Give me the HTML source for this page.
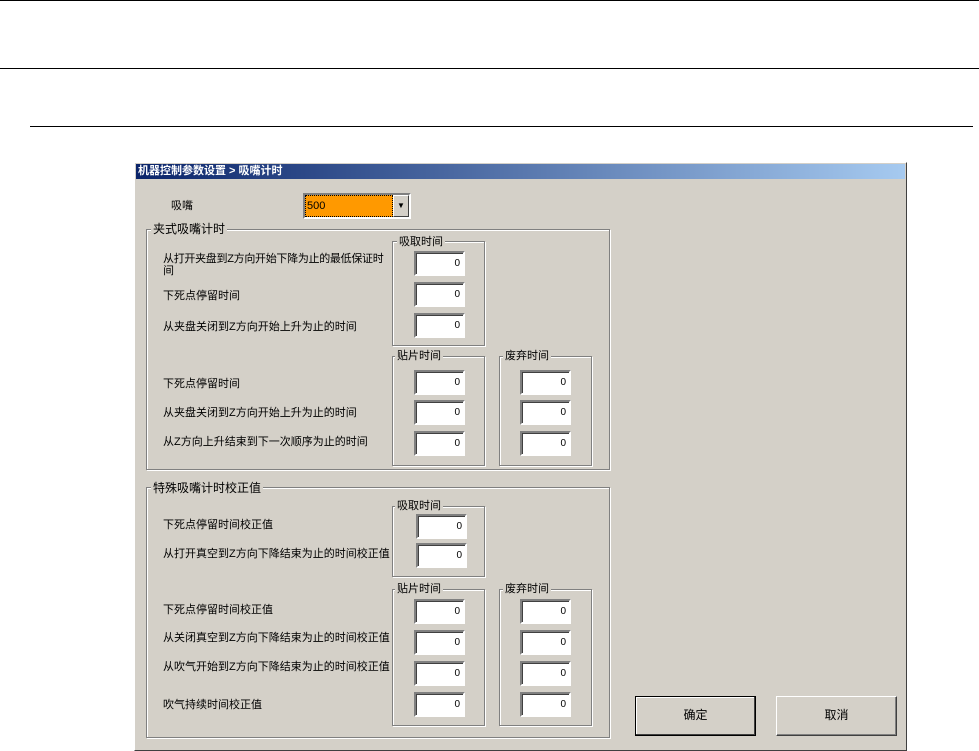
<!DOCTYPE html><html><head><meta charset="utf-8"><style>
body{margin:0;width:979px;height:751px;background:#fff;position:relative;overflow:hidden;font-family:"Liberation Sans","Noto Sans CJK SC",sans-serif;font-size:11px;color:#000}
div{position:absolute;box-sizing:border-box}
.hl{height:1px;background:#000}
.win{left:134px;top:162px;width:773px;height:589px;background:#d4d0c8;border:1px solid #fff;border-right-color:#404040;border-bottom-color:#404040}
.tb{left:136px;top:164px;width:769px;height:15px;background:linear-gradient(90deg,#0a246a,#a6caf0);color:#fff;font-weight:bold;font-size:11px;line-height:15px;padding-left:2px}
.g{border:1px solid #808080;box-shadow:1px 1px 0 #fff inset,1px 1px 0 #fff}
.gl{background:#d4d0c8;padding:0 2px;line-height:12px;white-space:nowrap}
.in{width:51px;height:25px;background:#fff;border:2px solid;border-color:#808080 #fff #fff #808080;box-shadow:1px 1px 0 #404040 inset;text-align:right;padding-right:3px;line-height:21px;font-size:10px}
.t{white-space:nowrap;line-height:12px}
.btn{width:121px;height:40px;background:#d4d0c8;border:1px solid;border-color:#fff #404040 #404040 #fff;box-shadow:-1px -1px 0 #808080 inset;text-align:center;line-height:37px;font-size:12px}
</style></head><body>
<div class="hl" style="left:0;top:0;width:979px"></div>
<div class="hl" style="left:0;top:68px;width:979px"></div>
<div class="hl" style="left:30px;top:126px;width:943px"></div>
<div class="win"></div>
<div class="tb">机器控制参数设置 &gt; 吸嘴计时</div>
<div class="t" style="left:171px;top:200px">吸嘴</div>
<div style="left:303px;top:193px;width:108px;height:26px;border:2px solid;border-color:#808080 #fff #fff #808080;background:#fff"></div>
<div style="left:305px;top:195px;width:88px;height:22px;background:#ff9900;border:1px dotted #000;line-height:20px;padding-left:1px">500</div>
<div style="left:393px;top:195px;width:16px;height:22px;background:#d4d0c8;border:1px solid;border-color:#fff #404040 #404040 #fff;text-align:center;font-size:8px;line-height:20px">▼</div>

<div class="g" style="left:146px;top:229px;width:464px;height:241px"></div>
<div class="gl" style="left:151px;top:223px;font-size:12px">夹式吸嘴计时</div>
<div class="t" style="left:163px;top:253px;font-size:11px;letter-spacing:-0.3px">从打开夹盘到Z方向开始下降为止的最低保证时<br>间</div>
<div class="t" style="left:163px;top:290px">下死点停留时间</div>
<div class="t" style="left:163px;top:321px">从夹盘关闭到Z方向开始上升为止的时间</div>
<div class="g" style="left:392px;top:241px;width:93px;height:105px"></div>
<div class="gl" style="left:397px;top:236px">吸取时间</div>
<div class="in" style="left:414px;top:251px">0</div>
<div class="in" style="left:414px;top:282px">0</div>
<div class="in" style="left:414px;top:313px">0</div>
<div class="g" style="left:392px;top:356px;width:93px;height:110px"></div>
<div class="gl" style="left:395px;top:350px">贴片时间</div>
<div class="g" style="left:499px;top:356px;width:93px;height:110px"></div>
<div class="gl" style="left:503px;top:350px">废弃时间</div>
<div class="in" style="left:414px;top:370px">0</div><div class="in" style="left:414px;top:400px">0</div><div class="in" style="left:414px;top:431px">0</div>
<div class="in" style="left:520px;top:370px">0</div><div class="in" style="left:520px;top:400px">0</div><div class="in" style="left:520px;top:431px">0</div>
<div class="t" style="left:163px;top:378px">下死点停留时间</div>
<div class="t" style="left:163px;top:407px">从夹盘关闭到Z方向开始上升为止的时间</div>
<div class="t" style="left:163px;top:436px">从Z方向上升结束到下一次顺序为止的时间</div>

<div class="g" style="left:146px;top:487px;width:464px;height:251px"></div>
<div class="gl" style="left:151px;top:482px;font-size:12px">特殊吸嘴计时校正值</div>
<div class="g" style="left:392px;top:506px;width:93px;height:71px"></div>
<div class="gl" style="left:395px;top:500px">吸取时间</div>
<div class="in" style="left:416px;top:514px">0</div><div class="in" style="left:416px;top:543px">0</div>
<div class="t" style="left:163px;top:519px">下死点停留时间校正值</div>
<div class="t" style="left:163px;top:548px">从打开真空到Z方向下降结束为止的时间校正值</div>
<div class="g" style="left:392px;top:589px;width:93px;height:137px"></div>
<div class="gl" style="left:395px;top:583px">贴片时间</div>
<div class="g" style="left:499px;top:589px;width:93px;height:137px"></div>
<div class="gl" style="left:503px;top:583px">废弃时间</div>
<div class="in" style="left:414px;top:599px">0</div><div class="in" style="left:414px;top:630px">0</div><div class="in" style="left:414px;top:661px">0</div><div class="in" style="left:414px;top:692px">0</div>
<div class="in" style="left:520px;top:599px">0</div><div class="in" style="left:520px;top:630px">0</div><div class="in" style="left:520px;top:661px">0</div><div class="in" style="left:520px;top:692px">0</div>
<div class="t" style="left:163px;top:604px">下死点停留时间校正值</div>
<div class="t" style="left:163px;top:632px">从关闭真空到Z方向下降结束为止的时间校正值</div>
<div class="t" style="left:163px;top:661px">从吹气开始到Z方向下降结束为止的时间校正值</div>
<div class="t" style="left:163px;top:699px">吹气持续时间校正值</div>

<div class="btn" style="left:635px;top:696px;border:1px solid #000;box-shadow:-1px -1px 0 #404040 inset,1px 1px 0 #fff inset">确定</div>
<div class="btn" style="left:776px;top:696px">取消</div>
</body></html>
